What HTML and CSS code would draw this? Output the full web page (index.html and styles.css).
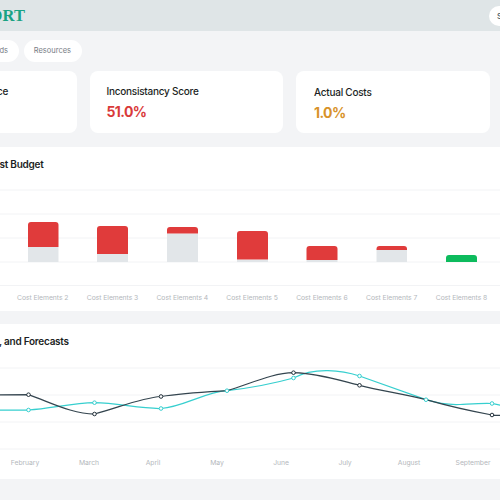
FILE: index.html
```html
<!DOCTYPE html>
<html lang="en">
<head>
<meta charset="utf-8">
<title>Report</title>
<link rel="stylesheet" href="styles.css">
</head>
<body>
<div class="page">
  <header class="topbar">
    <div class="logo">REPORT</div>
    <button class="signin">Sign in</button>
  </header>
  <main class="content">
    <nav class="tabs">
      <span class="tab tab-first">Downloads</span>
      <span class="tab">Resources</span>
    </nav>
    <section class="kpis">
      <div class="kpi"><div class="kpi-label">Planned Costs Variance</div><div class="kpi-value red">12.0%</div></div>
      <div class="kpi"><div class="kpi-label">Inconsistancy Score</div><div class="kpi-value red">51.0%</div></div>
      <div class="kpi kpi-low"><div class="kpi-label">Actual Costs</div><div class="kpi-value amber">1.0%</div></div>
    </section>
    <section class="panel panel-bars">
      <h2 class="panel-title">Actual Cost vs Cost Budget</h2>
      <svg class="chart" width="760" height="105" viewBox="-117 185 760 105" aria-hidden="true">
        <g class="grid">
          <path d="M-117 190H643M-117 214H643M-117 238H643M-117 262H643M-117 285.5H643"/>
        </g>
        <path class="grey" d="M28 247H58.5V262H28Z"/>
        <path class="red-fill" d="M28 247V225Q28 222 31 222H55.500Q58.500 222 58.500 225V247Z"/>
        <path class="grey" d="M97 254H128V262H97Z"/>
        <path class="red-fill" d="M97 254V229Q97 226 100 226H125Q128 226 128 229V254Z"/>
        <path class="grey" d="M167 233.500H198V262H167Z"/>
        <path class="red-fill" d="M167 233.500V230Q167 227 170 227H195Q198 227 198 230V233.500Z"/>
        <path class="grey" d="M237 259.500H268V262H237Z"/>
        <path class="red-fill" d="M237 259.500V234Q237 231 240 231H265Q268 231 268 234V259.500Z"/>
        <path class="grey" d="M306.500 260H337.500V262H306.500Z"/>
        <path class="red-fill" d="M306.500 260V249Q306.500 246 309.500 246H334.500Q337.500 246 337.500 249V260Z"/>
        <path class="grey" d="M376.500 250H407V262H376.500Z"/>
        <path class="red-fill" d="M376.500 250V249Q376.500 246 379.500 246H404Q407 246 407 249V250Z"/>
        <path class="green-fill" d="M446 262V258Q446 255 449 255H474Q477 255 477 258V262Z"/>
      </svg>
      <div class="axis axis-bars">
        <span>Cost Elements 1</span><span>Cost Elements 2</span><span>Cost Elements 3</span><span>Cost Elements 4</span><span>Cost Elements 5</span><span>Cost Elements 6</span><span>Cost Elements 7</span><span>Cost Elements 8</span><span>Cost Elements 9</span>
      </div>
    </section>
    <section class="panel panel-lines">
      <h2 class="panel-title">Actuals, Budgets, and Forecasts</h2>
      <svg class="chart" width="760" height="90" viewBox="-117 364 760 90" aria-hidden="true">
        <g class="grid">
          <path d="M-117 368H643M-117 395H643M-117 422H643M-117 449H643"/>
        </g>
        <path class="line line-teal" d="M-38 410L28.500 410C50 409 72 403 94.500 402.700C118 403 140 409 161 408.500C183 407 205 392 227 390.700C250 388 272 384 293.500 378C305 372 318 370.500 328 370.700C340 371 350 373 359.500 376C382 384 404 392 426 399.700C440 404 450 405 460 404.500C470 404 482 403 492 403.500C495 404 498 405 505 406"/>
        <path class="line line-dark" d="M-38 395L28.500 394.700C50 402 72 414 94.500 414C118 408 140 398 161 396.500C183 393 205 392 227 390.700C250 384 272 373 293.500 372.700C315 373 338 380 359.500 385.300C382 391 404 394 426 399.700C448 406 470 411 492 415C495 416 498 415.500 505 415"/>
        <g class="dots dots-teal">
          <circle cx="28.500" cy="410" r="1.800"/><circle cx="94.500" cy="402.700" r="1.800"/><circle cx="161" cy="408.500" r="1.800"/><circle cx="227" cy="390.700" r="1.800"/><circle cx="293.500" cy="378" r="1.800"/><circle cx="359.500" cy="376" r="1.800"/><circle cx="426" cy="399.700" r="1.800"/><circle cx="492" cy="403.500" r="1.800"/>
        </g>
        <g class="dots dots-dark">
          <circle cx="28.500" cy="394.700" r="1.800"/><circle cx="94.500" cy="414" r="1.800"/><circle cx="161" cy="396.500" r="1.800"/><circle cx="293.500" cy="372.700" r="1.800"/><circle cx="359.500" cy="385.300" r="1.800"/><circle cx="492" cy="415" r="1.800"/>
        </g>
      </svg>
      <div class="axis axis-lines">
        <span>January</span><span>February</span><span>March</span><span>April</span><span>May</span><span>June</span><span>July</span><span>August</span><span>September</span><span>October</span>
      </div>
    </section>
  </main>
</div>
</body>
</html>
```
FILE: styles.css
```css
html, body {
  margin: 0;
  padding: 0;
  width: 500px;
  height: 500px;
  overflow: hidden;
  background: #f3f4f6;
}
.page {
  width: 780px;
  margin-left: -127px;
  font-family: Inter, "Open Sans", sans-serif;
}
.topbar {
  height: 31px;
  background: #dfe5e7;
  display: flex;
  align-items: center;
}
.logo {
  width: 152px;
  text-align: right;
  font-family: "Liberation Serif", serif;
  font-weight: 700;
  font-size: 16.500px;
  letter-spacing: 0.1px;
  color: #1aa283;
}
.signin {
  margin-left: 464px;
  height: 20px;
  width: 60px;
  border: 0;
  border-radius: 10px;
  background: #fff;
  color: #4a5a64;
  font: 500 8px Inter, sans-serif;
  text-align: left;
  padding: 0 0 0 8px;
}
.content {
  padding: 9px 10px 0;
}
.tabs {
  display: flex;
  gap: 5px;
  height: 22px;
}
.tab {
  width: 58px;
  height: 22px;
  box-sizing: border-box;
  border-radius: 11px;
  background: #fff;
  color: #777d85;
  font-size: 7.500px;
  line-height: 22px;
  text-align: right;
  padding-right: 11px;
}
.tab-first {
  margin-left: 68px;
  width: 68px;
}
.kpis {
  display: grid;
  grid-template-columns: repeat(3, 193.500px);
  gap: 13px;
  margin-top: 9px;
}
.kpi {
  height: 62px;
  box-sizing: border-box;
  background: #fff;
  border-radius: 8px;
  padding: 14px 17px;
}
.kpi-low {
  padding: 15px 18px;
}
.kpi-label {
  font-size: 10px;
  letter-spacing: -0.250px;
  line-height: 13px;
  font-weight: 500;
  color: #1c1f24;
}
.kpi-value {
  margin-top: 4px;
  font-size: 14px;
  letter-spacing: -0.600px;
  line-height: 19px;
  font-weight: 700;
}
.red { color: #d93a3a; }
.amber { color: #d8922a; }
.panel {
  background: #fff;
  margin-top: 14px;
  overflow: hidden;
}
.panel-bars { height: 164px; }
.panel-lines { height: 155px; margin-top: 13px; }
.panel-title {
  margin: 0;
  font-size: 10px;
  letter-spacing: -0.250px;
  line-height: 13px;
  font-weight: 600;
  color: #1c1f24;
  padding-top: 11px;
}
.panel-bars .panel-title { padding-left: 35px; }
.panel-lines .panel-title { padding-left: 38px; }
.chart {
  display: block;
}
.panel-bars .chart { margin-top: 14px; }
.panel-lines .chart { margin-top: 16px; }
.grid path {
  stroke: #f2f3f5;
  stroke-width: 1;
  fill: none;
}
.grey { fill: #e2e6e9; }
.red-fill { fill: #e03b3b; }
.green-fill { fill: #0dbb5d; }
.line {
  fill: none;
  stroke-width: 1.250;
}
.line-teal { stroke: #37cfcf; }
.line-dark { stroke: #34454f; }
.dots circle {
  fill: #fff;
  stroke-width: 1;
}
.dots-teal circle { stroke: #37cfcf; }
.dots-dark circle { stroke: #22303a; }
.axis {
  display: flex;
  font-size: 6.800px;
  letter-spacing: -0.050px;
  line-height: 10px;
  color: #b4b8bc;
  white-space: nowrap;
}
.axis span {
  flex: none;
  text-align: center;
}
.axis-bars {
  padding-left: 55px;
  margin-top: 3px;
}
.axis-bars span { width: 69.800px; }
.axis-lines {
  padding-left: 46px;
  margin-top: 4px;
}
.axis-lines span { width: 64px; }
```
